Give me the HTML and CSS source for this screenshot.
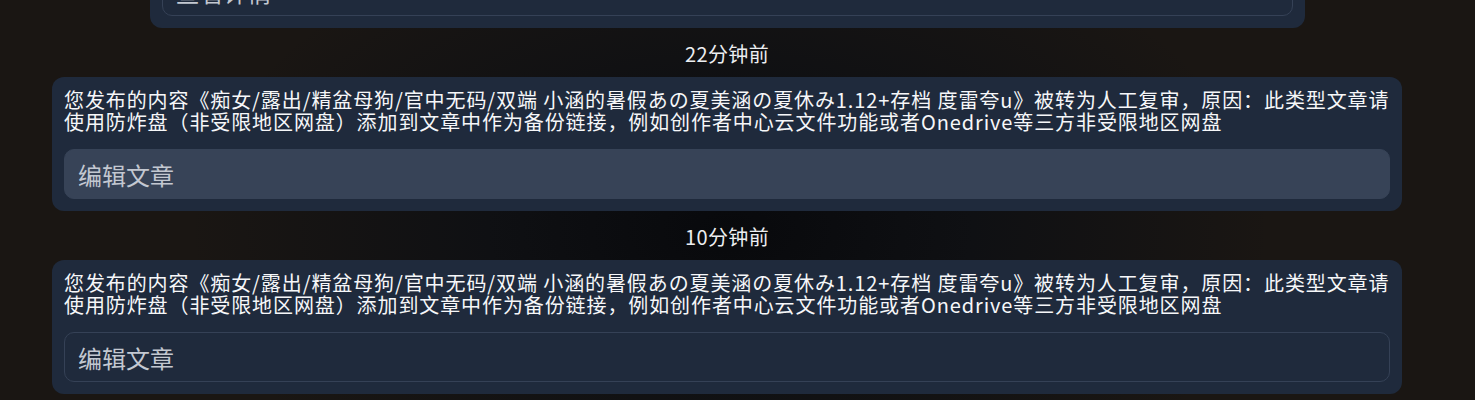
FILE: index.html
```html
<!DOCTYPE html>
<html lang="zh-CN">
<head>
  <meta charset="UTF-8" />
  <meta name="viewport" content="width=device-width, initial-scale=1.0"/>
  <title>消息通知</title>
  <link rel="stylesheet" href="styles.css">
</head>
<body>

  <div class="feed">

    <div class="card card-narrow">
      <button class="action outline">查看详情</button>
    </div>

    <div class="time">22分钟前</div>
    <div class="card">
      <p class="msg">您发布的内容《痴女/露出/精盆母狗/官中无码/双端 小涵的暑假あの夏美涵の夏休み1.12+存档 度雷夸u》被转为人工复审，原因：此类型文章请使用防炸盘（非受限地区网盘）添加到文章中作为备份链接，例如创作者中心云文件功能或者Onedrive等三方非受限地区网盘</p>
      <button class="action filled">编辑文章</button>
    </div>

    <div class="time">10分钟前</div>
    <div class="card">
      <p class="msg">您发布的内容《痴女/露出/精盆母狗/官中无码/双端 小涵的暑假あの夏美涵の夏休み1.12+存档 度雷夸u》被转为人工复审，原因：此类型文章请使用防炸盘（非受限地区网盘）添加到文章中作为备份链接，例如创作者中心云文件功能或者Onedrive等三方非受限地区网盘</p>
      <button class="action outline">编辑文章</button>
    </div>

  </div>

</body>
</html>
```

FILE: styles.css
```css
html, body {
  height: 100%;
}
body {
  margin: 0;
  overflow: hidden;
  font-family: "Noto Sans CJK SC", "Noto Sans", sans-serif;
  color: #f1f5f9;
  background-color: #1a1613;
  background-image: radial-gradient(ellipse 540px 320px at 730px 230px, #08090c 0%, #0f1013 45%, rgba(26, 22, 19, 0) 100%);
}
.feed {
  width: 1350px;
  margin-left: 52px;
  display: flex;
  flex-direction: column;
  align-items: center;
}
.card {
  box-sizing: border-box;
  width: 100%;
  background: #1f2a3c;
  border-radius: 12px;
  padding: 12px;
  display: flex;
  flex-direction: column;
  gap: 16px;
}
.card-narrow {
  width: 1155px;
  margin-top: -46px;
}
.msg {
  margin: 0;
  font-size: 20px;
  line-height: 22px;
  letter-spacing: 0.9px;
  color: #f6f7f9;
}
.time {
  margin: 13px 0 11px;
  font-size: 20px;
  line-height: 25px;
  letter-spacing: 0.4px;
  color: #eceef1;
}
.action {
  box-sizing: border-box;
  height: 50px;
  width: 100%;
  padding: 0 13px;
  border-radius: 10px;
  font-family: inherit;
  font-size: 24px;
  text-align: left;
  color: #c3c8d1;
  cursor: pointer;
}
.filled {
  background: #374357;
  border: 1px solid #374357;
}
.outline {
  background: transparent;
  border: 1px solid #354156;
}
```
